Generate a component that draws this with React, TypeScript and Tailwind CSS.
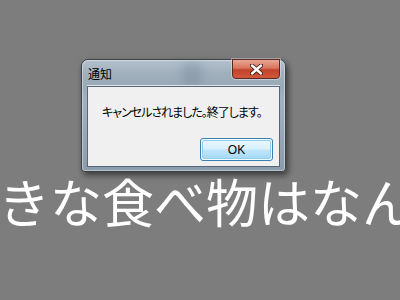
import React from "react";

export default function App() {
  return (
    <div className="relative w-[400px] h-[300px] overflow-hidden bg-[#7d7d7d] font-['Noto_Sans_CJK_JP',sans-serif]">
      <div className="pt-[164px] ml-[-2px] whitespace-nowrap text-white text-[52px] leading-[74px] font-['Noto_Sans_CJK_JP',sans-serif]">
        きな食べ物はなん
      </div>

      <div className="absolute left-[81px] top-[59px] w-[205px] h-[113px] rounded-t-[7px] rounded-b-[4px] border border-[#3b4148] shadow-[2px_3px_6px_rgba(0,0,0,0.55)] bg-[linear-gradient(to_bottom,#b4c1cd_0px,#a2b1be_12px,#9aa9b7_26px,#a2b1bf_40px,#8c9cab_100%)] flex flex-col">
        <div className="absolute inset-0 rounded-t-[6px] rounded-b-[3px] border border-[rgba(255,255,255,0.4)] pointer-events-none" />
        <div className="absolute left-[100px] top-[2px] w-[20px] h-[24px] bg-[rgba(80,100,120,0.22)] blur-[5px]" />
        <div className="relative h-[26px] flex items-center pl-[6px] text-[12px] text-black leading-none">
          <span className="mt-[1px]">通知</span>
        </div>
        <div className="absolute top-[-1px] right-[5px] w-[48px] h-[20px] rounded-b-[4px] border border-[#5a2a20] bg-[linear-gradient(to_bottom,#e9a796_0%,#d8755e_45%,#c2412a_55%,#d0583d_100%)] flex items-center justify-center shadow-[0_0_0_1px_rgba(255,255,255,0.35)]">
          <svg width="13" height="11" viewBox="0 0 13 11">
            <path d="M2 1.5 L11 9.5 M11 1.5 L2 9.5" stroke="#3a1a14" strokeWidth="4.2" strokeLinecap="round" />
            <path d="M2 1.5 L11 9.5 M11 1.5 L2 9.5" stroke="#ffffff" strokeWidth="2.4" strokeLinecap="round" />
          </svg>
        </div>
        <div className="relative mx-[5px] mb-[4px] flex-1 border border-[#56667a] bg-[#f0f0f0] shadow-[0_-1px_0_rgba(255,255,255,0.7)] flex flex-col">
          <div className="pl-[14px] pt-[15px] text-[12px] leading-[20px] text-black [font-feature-settings:'palt'] tracking-[-1px] whitespace-nowrap">
            キャンセルされました。終了します。
          </div>
          <div className="flex-1" />
          <div className="flex justify-end pr-[6px] pb-[5px]">
            <div className="w-[73px] h-[23px] rounded-[3px] border border-[#3c7fb1] p-[1px] bg-[#f2fbfe]">
              <div className="w-full h-full rounded-[2px] border border-[#8fd0f0] bg-[linear-gradient(to_bottom,#e9f6fd_0%,#d9f0fc_45%,#bee6fd_55%,#a7d9f5_100%)] flex items-center justify-center text-[12px] leading-none text-black font-['Liberation_Sans',sans-serif]">
                OK
              </div>
            </div>
          </div>
        </div>
      </div>
    </div>
  );
}
